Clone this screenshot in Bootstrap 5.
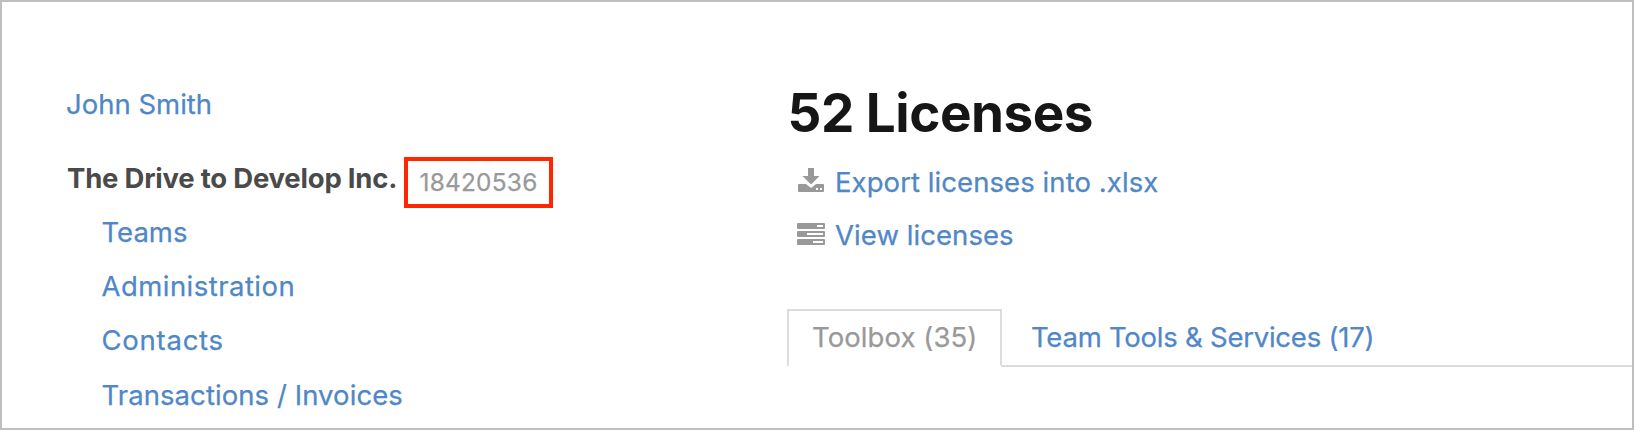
<!DOCTYPE html>
<html lang="en">
<head>
<meta charset="utf-8">
<meta name="viewport" content="width=device-width, initial-scale=1">
<title>Licenses</title>
<link href="https://cdn.jsdelivr.net/npm/bootstrap@5.3.0/dist/css/bootstrap.min.css" rel="stylesheet">
<style>
body{font-family:Inter,"Liberation Sans",sans-serif;font-size:27.5px;color:#4a4a4a;white-space:nowrap}
a{color:#4f87c7;text-decoration:none;-webkit-text-stroke:.25px currentColor}
.page-frame{border:2px solid #bfbfbf;height:430px;overflow:hidden}
.side{width:720px;padding-left:64px;padding-top:75px}
.person{line-height:54px;margin-bottom:26px}
.org{height:51px;padding-left:1px}
.org-name{font-weight:700;line-height:42px;width:337px;letter-spacing:-.22px}
.org-id{border:4px solid #ff2600;width:149px;line-height:43px;font-size:24.4px;color:#999;letter-spacing:.25px;-webkit-text-stroke:.25px currentColor}
.side-links{line-height:48px;gap:6px;padding-left:35.5px}
.loose{letter-spacing:.46px}
.looser{letter-spacing:.75px}
.lower{padding-top:1px;letter-spacing:.07px}
.main-col{padding-top:81px;margin-left:65px}
h1{font-size:53px;font-weight:700;line-height:60px;color:#161616;margin-bottom:12px;padding-left:.5px;letter-spacing:-.48px}
.act{line-height:53px;height:53px;gap:10px;padding-left:10px}
.act a{padding-top:2px;letter-spacing:.07px}
.act svg{width:28px;height:27px;fill:#999}
.nav-tabs{border-bottom:2px solid #dcdcdc;margin-top:48px;height:58px;--bs-nav-tabs-border-width:2px;--bs-nav-tabs-border-radius:0;flex-wrap:nowrap}
.nav-tabs .nav-link{line-height:52px;padding:0 27px 2px;height:58px;border-width:2px;margin-bottom:-2px;color:#4f87c7;letter-spacing:-.24px}
.nav-tabs .nav-link.active{color:#999;border-color:#dcdcdc #dcdcdc #fff;width:215px;padding:0 23px 2px;letter-spacing:.08px}
</style>
</head>
<body>
<div class="page-frame d-flex">
  <aside class="side flex-shrink-0">
    <div class="person"><a href="#">John Smith</a></div>
    <div class="org d-flex">
      <div class="org-name">The Drive to Develop Inc.</div>
      <div class="org-id text-center">18420536</div>
    </div>
    <nav class="side-links d-flex flex-column">
      <a href="#">Teams</a>
      <a class="loose" href="#">Administration</a>
      <a class="looser" href="#">Contacts</a>
      <a class="lower" href="#">Transactions / Invoices</a>
    </nav>
  </aside>
  <main class="main-col flex-grow-1">
    <h1>52 Licenses</h1>
    <div class="act d-flex align-items-center">
      <svg viewBox="0 0 28 27"><path d="M11 0h6v8h5.5l-8.5 8.500-8.500-8.500h5.500z"/><path d="M2 16h7l5 4 5-4h7q1 0 1 1v6q0 1-1 1H2q-1 0-1-1v-6q0-1 1-1zM19 20v2h2v-2zM23 20v2h2v-2z" fill-rule="evenodd"/></svg>
      <a href="#">Export licenses into .xlsx</a>
    </div>
    <div class="act d-flex align-items-center">
      <svg viewBox="0 0 28 27"><path fill-rule="evenodd" d="M1 2h26q1 0 1 1v4q0 1-1 1H1Q0 8 0 7V3q0-1 1-1zM20 4v2h6V4zM1 10h26q1 0 1 1v4q0 1-1 1H1q-1 0-1-1v-4q0-1 1-1zM10 12v2h16v-2zM1 18h26q1 0 1 1v4q0 1-1 1H1q-1 0-1-1v-4q0-1 1-1zM16 20v2h10v-2z"/></svg>
      <a href="#">View licenses</a>
    </div>
    <ul class="nav nav-tabs">
      <li class="nav-item"><a class="nav-link active" href="#">Toolbox (35)</a></li>
      <li class="nav-item"><a class="nav-link" href="#">Team Tools &amp; Services (17)</a></li>
    </ul>
  </main>
</div>
<script src="https://cdn.jsdelivr.net/npm/bootstrap@5.3.0/dist/js/bootstrap.bundle.min.js"></script>
</body>
</html>
